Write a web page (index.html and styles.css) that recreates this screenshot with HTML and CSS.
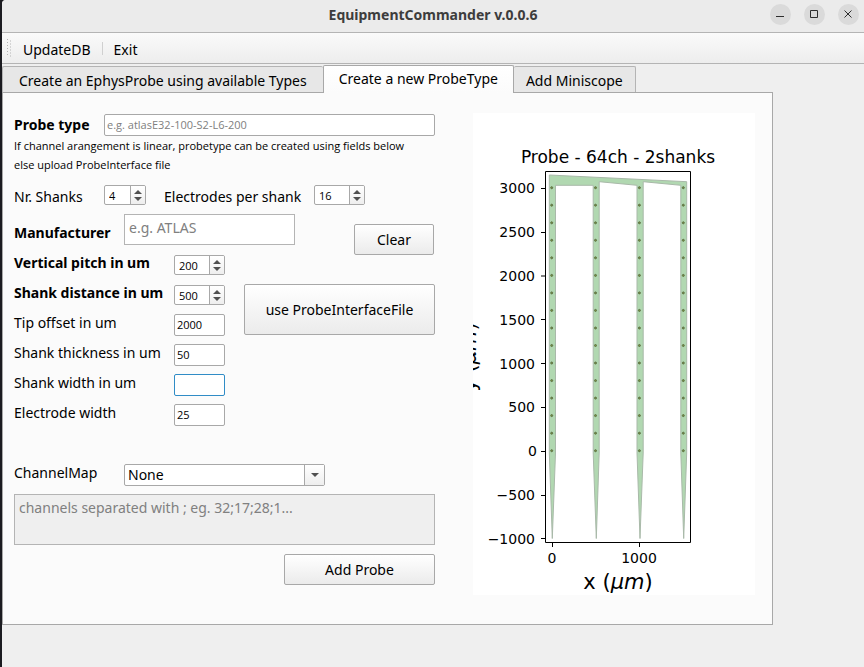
FILE: index.html
```html
<!DOCTYPE html>
<html lang="en">
<head>
<meta charset="utf-8">
<title>EquipmentCommander v.0.0.6</title>
<link rel="stylesheet" href="styles.css">
</head>
<body>
<div class="window">
  <header class="titlebar">
    <h1 class="title">EquipmentCommander v.0.0.6</h1>
    <div class="controls">
      <button class="control" aria-label="Minimize"><svg width="21" height="21"><path d="M6 12.500h8"/></svg></button>
      <button class="control" aria-label="Maximize"><svg width="21" height="21"><path d="M6.500 6.500h7v7h-7z"/></svg></button>
      <button class="control" aria-label="Close"><svg width="21" height="21"><path d="M6.500 6.500l7 7M13.500 6.500l-7 7"/></svg></button>
    </div>
  </header>

  <nav class="toolbar">
    <svg class="grip" width="6" height="18"><path d="M1.500 0v18M4.500 1.500v16"/></svg>
    <button class="tool">UpdateDB</button>
    <span class="divider"></span>
    <button class="tool">Exit</button>
  </nav>

  <div class="tabs" role="tablist">
    <button class="tab" role="tab">Create an EphysProbe using available Types</button>
    <button class="tab active" role="tab" aria-selected="true">Create a new ProbeType</button>
    <button class="tab" role="tab">Add Miniscope</button>
  </div>

  <main class="pane">
    <form class="form">
      <div class="row probe">
        <label class="strong" for="probe">Probe type</label>
        <input class="field" id="probe" type="text" placeholder="e.g. atlasE32-100-S2-L6-200">
      </div>
      <p class="hint">If channel arangement is linear, probetype can be created using fields below<br>else upload ProbeInterface file</p>

      <div class="row shanks">
        <label for="shanks">Nr. Shanks</label>
        <div class="spin small">
          <input id="shanks" type="number" value="4">
          <div class="steps"><button type="button" aria-label="Increase"><svg width="8" height="4"><path d="M0 4l4-4 4 4z"/></svg></button><button type="button" aria-label="Decrease"><svg width="8" height="4"><path d="M0 0l4 4 4-4z"/></svg></button></div>
        </div>
        <label for="electrodes">Electrodes per shank</label>
        <div class="spin">
          <input id="electrodes" type="number" value="16">
          <div class="steps"><button type="button" aria-label="Increase"><svg width="8" height="4"><path d="M0 4l4-4 4 4z"/></svg></button><button type="button" aria-label="Decrease"><svg width="8" height="4"><path d="M0 0l4 4 4-4z"/></svg></button></div>
        </div>
      </div>

      <div class="row maker">
        <label class="strong" for="maker">Manufacturer</label>
        <textarea class="box" id="maker" placeholder="e.g. ATLAS"></textarea>
        <button class="button clear" type="reset">Clear</button>
      </div>

      <div class="geometry">
        <div class="params">
          <label class="strong" for="pitch">Vertical pitch in um</label>
          <div class="spin">
            <input id="pitch" type="number" value="200">
            <div class="steps"><button type="button" aria-label="Increase"><svg width="8" height="4"><path d="M0 4l4-4 4 4z"/></svg></button><button type="button" aria-label="Decrease"><svg width="8" height="4"><path d="M0 0l4 4 4-4z"/></svg></button></div>
          </div>
          <label class="strong" for="distance">Shank distance in um</label>
          <div class="spin">
            <input id="distance" type="number" value="500">
            <div class="steps"><button type="button" aria-label="Increase"><svg width="8" height="4"><path d="M0 4l4-4 4 4z"/></svg></button><button type="button" aria-label="Decrease"><svg width="8" height="4"><path d="M0 0l4 4 4-4z"/></svg></button></div>
          </div>
          <label for="tip">Tip offset in um</label>
          <input class="field" id="tip" type="text" value="2000">
          <label for="thickness">Shank thickness in um</label>
          <input class="field" id="thickness" type="text" value="50">
          <label for="width">Shank width in um</label>
          <input class="field current" id="width" type="text">
          <label for="ewidth">Electrode width</label>
          <input class="field" id="ewidth" type="text" value="25">
        </div>
        <button class="button file" type="button">use ProbeInterfaceFile</button>
      </div>

      <div class="row map">
        <label for="map">ChannelMap</label>
        <div class="combo">
          <select id="map"><option>None</option></select>
          <span class="arrow"><svg width="8" height="4"><path d="M0 0l4 4 4-4z"/></svg></span>
        </div>
      </div>
      <textarea class="box channels" aria-label="Channels" placeholder="channels separated with ; eg. 32;17;28;1..." disabled></textarea>
      <button class="button add" type="submit">Add Probe</button>
    </form>

    <svg class="figure" viewBox="473 113 282 482" role="img" aria-label="Probe - 64ch - 2shanks">
      <defs>
        <g id="column" fill="#7d9a3c" stroke="#5c7048" stroke-width="1">
          <circle cy="187.700" r="1"/><circle cy="205.200" r="1"/><circle cy="222.800" r="1"/><circle cy="240.300" r="1"/>
          <circle cy="257.800" r="1"/><circle cy="275.400" r="1"/><circle cy="292.900" r="1"/><circle cy="310.400" r="1"/>
          <circle cy="328" r="1"/><circle cy="345.500" r="1"/><circle cy="363" r="1"/><circle cy="380.600" r="1"/>
          <circle cy="398.100" r="1"/><circle cy="415.600" r="1"/><circle cy="433.200" r="1"/><circle cy="450.700" r="1"/>
        </g>
      </defs>
      <path fill="#b1d8b1" stroke="#a9b9a9" stroke-width="1" d="M549.300 175L686.700 181.700V453L683.700 538.500L680.800 453V185.300L643.200 181.700V453L640 538.500L637 453V185.300L599.200 181.700V453L596.300 538.500L593.200 453V185.300H555.500V453L552.300 538.500L549.300 453Z"/>
      <use href="#column" x="551.700"/><use href="#column" x="595.500"/><use href="#column" x="639.400"/><use href="#column" x="683.300"/>
      <path class="axes" d="M545.500 171.500H690.500V542.500H545.500ZM541 188.500h4M541 232.500h4M541 276h4M541 319.500h4M541 363.500h4M541 407.500h4M541 451.500h4M541 495.500h4M541 538.500h4M552.500 543v4M639.500 543v4"/>
      <g class="ticks" text-anchor="end">
        <text x="535" y="193">3000</text><text x="535" y="237">2500</text><text x="535" y="281">2000</text>
        <text x="535" y="325">1500</text><text x="535" y="369">1000</text><text x="535" y="412">500</text>
        <text x="537" y="456">0</text><text x="535" y="500">−500</text><text x="535" y="544">−1000</text>
      </g>
      <g class="ticks" text-anchor="middle"><text x="552" y="563">0</text><text x="639" y="563">1000</text></g>
      <text class="heading" x="618" y="163" text-anchor="middle">Probe - 64ch - 2shanks</text>
      <text class="axis" x="618" y="589" text-anchor="middle">x (<tspan font-style="italic">μm</tspan>)</text>
      <text class="axis" transform="translate(476 357) rotate(-90)" text-anchor="middle">y (<tspan font-style="italic">μm</tspan>)</text>
    </svg>
  </main>
</div>
</body>
</html>
```
FILE: styles.css
```css
* { box-sizing: border-box; }

body {
  margin: 0;
  padding-left: 2px;
  background: #1b1b20;
  color: #000;
  font: 14px/18px "Noto Sans", sans-serif;
}

button, input, select, textarea { font: inherit; color: inherit; margin: 0; }

.window {
  min-height: 100vh;
  background: #efefef;
  border-top-left-radius: 4px;
  overflow: hidden;
}

.titlebar {
  display: grid;
  grid-template-columns: 1fr auto 1fr;
  height: 33px;
  background: #ebebeb;
  border-bottom: 1px solid #b4b4b4;
}

.title {
  grid-column: 2;
  margin: 0;
  font-size: 14px;
  line-height: 30px;
  color: #3d3d3d;
}

.controls {
  display: flex;
  justify-content: flex-end;
  gap: 13px;
  padding: 4px 5px 0 0;
}

.control {
  width: 21px;
  height: 21px;
  padding: 0;
  border: 0;
  border-radius: 50%;
  background: #dadada;
}

.control svg { display: block; fill: none; stroke: #2e2e2e; stroke-width: 1; }

.toolbar {
  display: flex;
  align-items: center;
  height: 31px;
  padding-left: 4px;
  border-bottom: 1px solid #b4b4b4;
  background: linear-gradient(#fafafa, #ededed);
}

.grip { stroke: #b4b4b4; stroke-dasharray: 1 2; }

.tool { padding: 3px 11px 0; border: 0; background: none; }

.divider { width: 1px; height: 13px; background: #d0d0d0; }

.tabs { display: flex; align-items: flex-end; height: 28px; padding-top: 1px; }

.tab {
  height: 26px;
  padding: 2px 12px 0;
  border: 1px solid #b4b4b4;
  border-bottom: 0;
  border-radius: 2px 2px 0 0;
  background: #e7e7e7;
  white-space: nowrap;
}

.tab + .tab { border-left: 0; }

.tab.active {
  position: relative;
  height: 28px;
  margin-bottom: -1px;
  padding: 1px 15px 2px;
  border: 1px solid #a8a8a8;
  border-bottom: 0;
  background: linear-gradient(#fff, #fbfbfb);
}

.tab:first-child { padding: 2px 16px 0; border-right: 0; }

.pane {
  display: flex;
  justify-content: space-between;
  align-items: flex-start;
  max-width: 771px;
  min-height: 533px;
  padding: 20px 17px 29px 11px;
  border: 1px solid #a8a8a8;
  background: #fbfbfb;
}

.form { width: 421px; padding-top: 1px; }

.row { display: flex; align-items: flex-start; }

.strong { font-weight: bold; }

.field {
  height: 22px;
  min-width: 0;
  padding: 0 2px 2px;
  border: 1px solid #a8a8a8;
  border-radius: 2px;
  background: #fff;
  font: 11px "Open Sans", sans-serif;
}

.field.current { border-color: #308cc6; outline: 0; }

::placeholder { color: #808080; opacity: 1; }

.probe label { width: 90px; line-height: 22px; }

.probe .field { flex: 1; }

.hint { margin: 0; padding-bottom: 2px; font: 11px/19px "Open Sans", sans-serif; }

.shanks { margin-top: 9px; height: 20px; }

.shanks label { line-height: 24px; width: 90px; }

.shanks .spin + label { width: 150px; margin-left: 18px; white-space: nowrap; }

.spin {
  display: flex;
  width: 51px;
  height: 20px;
  border: 1px solid #a8a8a8;
  border-radius: 2px;
  background: #fff;
  overflow: hidden;
}

.spin.small { width: 42px; }

.spin input {
  flex: 1;
  min-width: 0;
  padding: 0 0 0 4px;
  border: 0;
  background: none;
  font: 11px "Open Sans", sans-serif;
  appearance: textfield;
}

.spin input::-webkit-inner-spin-button { display: none; }

.steps {
  display: flex;
  flex-direction: column;
  justify-content: center;
  gap: 3px;
  width: 15px;
  border-left: 1px solid #a8a8a8;
  background: linear-gradient(#fff, #eee);
}

.steps button { display: flex; justify-content: center; height: 4px; padding: 0; border: 0; background: none; }

.steps svg, .arrow svg { fill: #505050; }

.maker { margin-top: 9px; }

.maker label { width: 110px; line-height: 37px; }

.box {
  display: block;
  width: 171px;
  height: 31px;
  padding: 4px;
  border: 1px solid #b4b4b4;
  background: #fff;
  resize: none;
  overflow: hidden;
}

.button {
  height: 31px;
  border: 1px solid #a8a8a8;
  border-radius: 2px;
  background: linear-gradient(#fff, #ebebeb);
}

.clear { width: 80px; margin: 10px 1px 0 auto; }

.geometry { display: flex; justify-content: space-between; }

.params { display: grid; grid-template-columns: 160px 51px; grid-auto-rows: 30px; white-space: nowrap; }

.params label { line-height: 16px; }

.params .field { margin-top: -1px; }

.file { width: 191px; height: 51px; margin-top: 29px; }

.map { margin-top: 29px; }

.map label { width: 110px; }

.combo { position: relative; width: 201px; }

.combo select {
  display: block;
  width: 100%;
  height: 22px;
  padding: 0 22px 0 3px;
  border: 1px solid #a8a8a8;
  border-radius: 2px;
  background: #fff;
  appearance: none;
}

.arrow {
  position: absolute;
  inset: 1px 1px 1px auto;
  display: flex;
  align-items: center;
  justify-content: center;
  width: 20px;
  border-left: 1px solid #a8a8a8;
  background: linear-gradient(#fff, #eee);
  pointer-events: none;
}

.channels { width: 100%; height: 51px; margin-top: 8px; background: #efefef; }

.add { display: block; width: 151px; margin: 9px 0 0 auto; }

.figure {
  width: 282px;
  height: 482px;
  background: #fff;
  overflow: hidden;
  font-family: "DejaVu Sans", sans-serif;
}

.axes { fill: none; stroke: #000; stroke-width: 1; }

.ticks { font-size: 14px; }

.heading { font-size: 17px; }

.axis { font-size: 21px; }
```
